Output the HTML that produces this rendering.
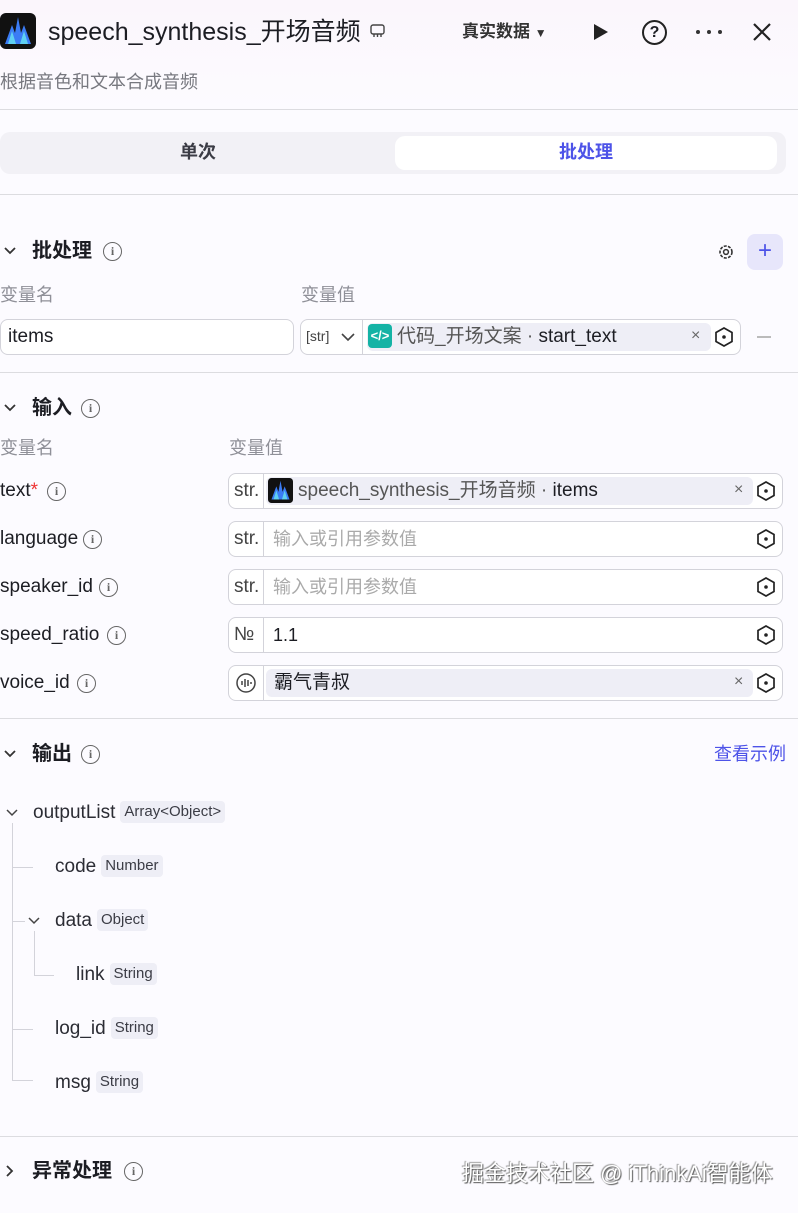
<!DOCTYPE html>
<html><head><meta charset="utf-8"><style>
*{margin:0;padding:0;box-sizing:border-box}
body{width:798px;height:1213px;background:#fcfbff;font-family:"Liberation Sans","Noto Sans CJK SC",sans-serif;color:#1c1d23;position:relative;overflow:hidden;line-height:1.2}
.a{position:absolute;white-space:nowrap}
.hr{position:absolute;left:0;width:798px;height:1px;background:#dcdce0}
.gray{color:#8f9098}
.sec{font-size:20px;font-weight:bold;color:#1c1d23}
.info{position:absolute;width:19px;height:19px;border:1.5px solid #666;border-radius:50%;font-size:12px;font-weight:bold;text-align:center;line-height:16px;color:#666;font-family:"Liberation Serif",serif}
.box{position:absolute;border:1px solid #d3d3da;border-radius:8px;background:#fff;height:36px}
.lbl{font-size:19px;line-height:22px}
.tag{display:inline-block;background:#eeeef6;border-radius:4px;font-size:15px;padding:2px 4px;color:#3b3c45;margin-left:5px;vertical-align:2px;line-height:18px}
.tree{font-size:19px;color:#2b2c34}
.ln{position:absolute;background:#d3d3da}
</style></head><body>
<div class="a" style="left:0;top:0;width:798px;height:110px;background:linear-gradient(#fbf6fc,#fcfbff)"></div>
<svg class="a" style="left:0;top:13px" width="36" height="36" viewBox="0 0 36 36"><rect width="36" height="36" rx="6" fill="#111"/><path d="M5 31 L12 12 L15 20 L18 4 L21 20 L24 12 L31 31Z" fill="#3b7cf5"/><path d="M8 31 L12 18 L16 31Z M20 31 L24 18 L28 31Z" fill="#5fd0f2"/></svg>
<div class="a" style="left:48px;top:17px;font-size:25px;color:#1c1d23">speech_synthesis_开场音频</div>
<svg class="a" style="left:370px;top:24px" width="15" height="15"><rect x="1" y="1" width="13" height="9" rx="2" stroke="#444" stroke-width="1.4" fill="none"/><path d="M4 10v3M7.5 10v3M11 10v3" stroke="#444" stroke-width="1.4"/></svg>
<div class="a" style="left:462px;top:22px;font-size:17px;font-weight:bold;color:#333">真实数据 <span style="font-size:12px">▼</span></div>
<svg class="a" style="left:592px;top:23px" width="18" height="18"><path d="M2 1 L16 9 L2 17Z" fill="#222"/></svg>
<div class="a" style="left:642px;top:20px;width:25px;height:25px;border:2px solid #222;border-radius:50%;text-align:center;font-size:16px;font-weight:bold;line-height:21px">?</div>
<svg class="a" style="left:695px;top:28px" width="28" height="8"><circle cx="3" cy="4" r="2" fill="#333"/><circle cx="14" cy="4" r="2" fill="#333"/><circle cx="25" cy="4" r="2" fill="#333"/></svg>
<svg class="a" style="left:752px;top:22px" width="20" height="20"><path d="M2 2L18 18M18 2L2 18" stroke="#222" stroke-width="2.2"/></svg>
<div class="a" style="left:0;top:72px;font-size:18px;color:#77787f">根据音色和文本合成音频</div>
<div class="hr" style="top:109px"></div>
<div class="a" style="left:0;top:132px;width:786px;height:42px;background:#f2f1f6;border-radius:10px"></div>
<div class="a" style="left:395px;top:136px;width:382px;height:34px;background:#fff;border-radius:10px"></div>
<div class="a" style="left:180px;top:142px;font-size:18px;font-weight:bold;color:#3b3c45">单次</div>
<div class="a" style="left:559px;top:142px;font-size:18px;font-weight:bold;color:#4d53e8">批处理</div>
<div class="hr" style="top:194px"></div>
<svg class="a" style="left:3px;top:244px" width="14" height="14"><path d="M2 4L7 9L12 4" stroke="#333" stroke-width="1.8" fill="none"/></svg>
<div class="a sec" style="left:32px;top:239px">批处理</div>
<div class="info" style="left:103px;top:242px">i</div>
<svg class="a" style="left:717px;top:243px" width="18" height="18" viewBox="0 0 18 18"><circle cx="9" cy="9" r="6" stroke="#333" stroke-width="1.6" fill="none" stroke-dasharray="3 1.3"/><circle cx="9" cy="9" r="2.4" stroke="#333" stroke-width="1.5" fill="none"/></svg>
<div class="a" style="left:747px;top:234px;width:36px;height:36px;background:#e7e6fb;border-radius:8px;color:#4d53e8;font-size:24px;text-align:center;line-height:34px">+</div>
<div class="a gray" style="left:0;top:285px;font-size:18px">变量名</div>
<div class="a gray" style="left:301px;top:285px;font-size:18px">变量值</div>
<div class="box" style="left:0;top:319px;width:294px"><span class="a lbl" style="left:7px;top:6px">items</span></div>
<div class="box" style="left:300px;top:319px;width:441px">
 <span class="a" style="left:5px;top:8px;font-size:14px;color:#444">[str]</span>
 <svg class="a" style="left:39px;top:10px" width="16" height="14"><path d="M2 4L8 10L14 4" stroke="#444" stroke-width="1.6" fill="none"/></svg>
 <div class="a" style="left:61px;top:0;width:1px;height:34px;background:#d3d3da"></div>
 <div class="a" style="left:66px;top:3px;width:344px;height:28px;background:#eeeef6;border-radius:6px"></div>
 <div class="a" style="left:67px;top:4px;width:24px;height:24px;background:#14b3a5;border-radius:4px;color:#fff;font-size:13px;font-weight:bold;text-align:center;line-height:24px">&lt;/&gt;</div>
 <span class="a lbl" style="left:96px;top:6px;color:#555">代码_开场文案 · <span style="color:#1c1d23">start_text</span></span>
 <span class="a" style="left:390px;top:6px;color:#666;font-size:16px">×</span>
</div>
<svg class="a" style="left:713px;top:326px" width="22" height="22"><path d="M11 2L19 6.5V15.5L11 20L3 15.5V6.5Z" stroke="#222" stroke-width="1.7" fill="none"/><circle cx="11" cy="11" r="1.8" fill="#222"/></svg>
<div class="a" style="left:757px;top:336px;width:14px;height:1.5px;background:#bbb"></div>
<div class="hr" style="top:372px"></div>
<svg class="a" style="left:3px;top:401px" width="14" height="14"><path d="M2 4L7 9L12 4" stroke="#333" stroke-width="1.8" fill="none"/></svg>
<div class="a sec" style="left:32px;top:396px">输入</div>
<div class="info" style="left:81px;top:399px">i</div>
<div class="a gray" style="left:0;top:438px;font-size:18px">变量名</div>
<div class="a gray" style="left:229px;top:438px;font-size:18px">变量值</div>

<div class="a lbl" style="left:0;top:480px">text<span style="color:#e33">*</span></div><div class="info" style="left:47px;top:482px">i</div>
<div class="a lbl" style="left:0;top:528px">language</div><div class="info" style="left:83px;top:530px">i</div>
<div class="a lbl" style="left:0;top:576px">speaker_id</div><div class="info" style="left:99px;top:578px">i</div>
<div class="a lbl" style="left:0;top:624px">speed_ratio</div><div class="info" style="left:107px;top:626px">i</div>
<div class="a lbl" style="left:0;top:672px">voice_id</div><div class="info" style="left:77px;top:674px">i</div>

<div class="box" style="left:228px;top:473px;width:555px">
 <span class="a" style="left:5px;top:6px;font-size:19px;color:#444">str.</span><div class="a" style="left:34px;top:0;width:1px;height:34px;background:#d3d3da"></div>
 <div class="a" style="left:37px;top:3px;width:487px;height:28px;background:#eeeef6;border-radius:6px"></div>
 <svg class="a" style="left:39px;top:4px" width="25" height="25" viewBox="0 0 36 36"><rect width="36" height="36" rx="5" fill="#111"/><path d="M5 31 L12 12 L15 20 L18 4 L21 20 L24 12 L31 31Z" fill="#3b7cf5"/><path d="M8 31 L12 18 L16 31Z M20 31 L24 18 L28 31Z" fill="#5fd0f2"/></svg>
 <span class="a lbl" style="left:69px;top:6px;color:#555">speech_synthesis_开场音频 · <span style="color:#1c1d23">items</span></span>
 <span class="a" style="left:505px;top:6px;color:#666;font-size:16px">×</span>
</div>
<div class="box" style="left:228px;top:521px;width:555px"><span class="a" style="left:5px;top:6px;font-size:19px;color:#444">str.</span><div class="a" style="left:34px;top:0;width:1px;height:34px;background:#d3d3da"></div><span class="a" style="left:44px;top:6px;font-size:18px;line-height:22px;color:#aaa">输入或引用参数值</span></div>
<div class="box" style="left:228px;top:569px;width:555px"><span class="a" style="left:5px;top:6px;font-size:19px;color:#444">str.</span><div class="a" style="left:34px;top:0;width:1px;height:34px;background:#d3d3da"></div><span class="a" style="left:44px;top:6px;font-size:18px;line-height:22px;color:#aaa">输入或引用参数值</span></div>
<div class="box" style="left:228px;top:617px;width:555px"><span class="a" style="left:5px;top:6px;font-size:19px;color:#444">№</span><div class="a" style="left:34px;top:0;width:1px;height:34px;background:#d3d3da"></div><span class="a lbl" style="left:44px;top:6px;font-size:18px">1.1</span></div>
<div class="box" style="left:228px;top:665px;width:555px">
 <svg class="a" style="left:6px;top:6px" width="22" height="22"><circle cx="11" cy="11" r="9" stroke="#444" stroke-width="1.5" fill="none"/><path d="M7 9v4M10 7v8M13 8v6M16 10v2" stroke="#444" stroke-width="1.5"/></svg>
 <div class="a" style="left:34px;top:0;width:1px;height:34px;background:#d3d3da"></div>
 <div class="a" style="left:37px;top:3px;width:487px;height:28px;background:#eeeef6;border-radius:6px"></div>
 <span class="a lbl" style="left:45px;top:6px">霸气青叔</span>
 <span class="a" style="left:505px;top:6px;color:#666;font-size:16px">×</span>
</div>
<svg class="a" style="left:755px;top:480px" width="22" height="22"><path d="M11 2L19 6.5V15.5L11 20L3 15.5V6.5Z" stroke="#222" stroke-width="1.7" fill="none"/><circle cx="11" cy="11" r="1.8" fill="#222"/></svg>
<svg class="a" style="left:755px;top:528px" width="22" height="22"><path d="M11 2L19 6.5V15.5L11 20L3 15.5V6.5Z" stroke="#222" stroke-width="1.7" fill="none"/><circle cx="11" cy="11" r="1.8" fill="#222"/></svg>
<svg class="a" style="left:755px;top:576px" width="22" height="22"><path d="M11 2L19 6.5V15.5L11 20L3 15.5V6.5Z" stroke="#222" stroke-width="1.7" fill="none"/><circle cx="11" cy="11" r="1.8" fill="#222"/></svg>
<svg class="a" style="left:755px;top:624px" width="22" height="22"><path d="M11 2L19 6.5V15.5L11 20L3 15.5V6.5Z" stroke="#222" stroke-width="1.7" fill="none"/><circle cx="11" cy="11" r="1.8" fill="#222"/></svg>
<svg class="a" style="left:755px;top:672px" width="22" height="22"><path d="M11 2L19 6.5V15.5L11 20L3 15.5V6.5Z" stroke="#222" stroke-width="1.7" fill="none"/><circle cx="11" cy="11" r="1.8" fill="#222"/></svg>
<div class="hr" style="top:718px"></div>
<svg class="a" style="left:3px;top:747px" width="14" height="14"><path d="M2 4L7 9L12 4" stroke="#333" stroke-width="1.8" fill="none"/></svg>
<div class="a sec" style="left:32px;top:742px">输出</div>
<div class="info" style="left:81px;top:745px">i</div>
<div class="a" style="left:714px;top:744px;font-size:18px;color:#4d53e8">查看示例</div>

<svg class="a" style="left:5px;top:806px" width="14" height="14"><path d="M2 4L7 9L12 4" stroke="#444" stroke-width="1.5" fill="none"/></svg>
<div class="ln" style="left:12px;top:823px;width:1px;height:257px"></div>
<div class="ln" style="left:12px;top:867px;width:21px;height:1px"></div>
<div class="ln" style="left:12px;top:921px;width:13px;height:1px"></div>
<div class="ln" style="left:12px;top:1029px;width:21px;height:1px"></div>
<div class="ln" style="left:12px;top:1080px;width:21px;height:1px"></div>
<svg class="a" style="left:27px;top:914px" width="14" height="14"><path d="M2 4L7 9L12 4" stroke="#444" stroke-width="1.5" fill="none"/></svg>
<div class="ln" style="left:34px;top:931px;width:1px;height:44px"></div>
<div class="ln" style="left:34px;top:975px;width:20px;height:1px"></div>
<div class="a tree" style="left:33px;top:801px">outputList<span class="tag">Array&lt;Object&gt;</span></div>
<div class="a tree" style="left:55px;top:855px">code<span class="tag">Number</span></div>
<div class="a tree" style="left:55px;top:909px">data<span class="tag">Object</span></div>
<div class="a tree" style="left:76px;top:963px">link<span class="tag">String</span></div>
<div class="a tree" style="left:55px;top:1017px">log_id<span class="tag">String</span></div>
<div class="a tree" style="left:55px;top:1071px">msg<span class="tag">String</span></div>
<div class="hr" style="top:1136px"></div>
<svg class="a" style="left:3px;top:1164px" width="14" height="14"><path d="M4 2L9 7L4 12" stroke="#333" stroke-width="1.8" fill="none"/></svg>
<div class="a sec" style="left:32px;top:1159px">异常处理</div>
<div class="info" style="left:124px;top:1162px">i</div>
<div class="a" style="left:462px;top:1161px;font-size:22px;color:#fff;text-shadow:1px 1px 1px #555,-1px -1px 1px #999">掘金技术社区 @ iThinkAi智能体</div>
</body></html>
